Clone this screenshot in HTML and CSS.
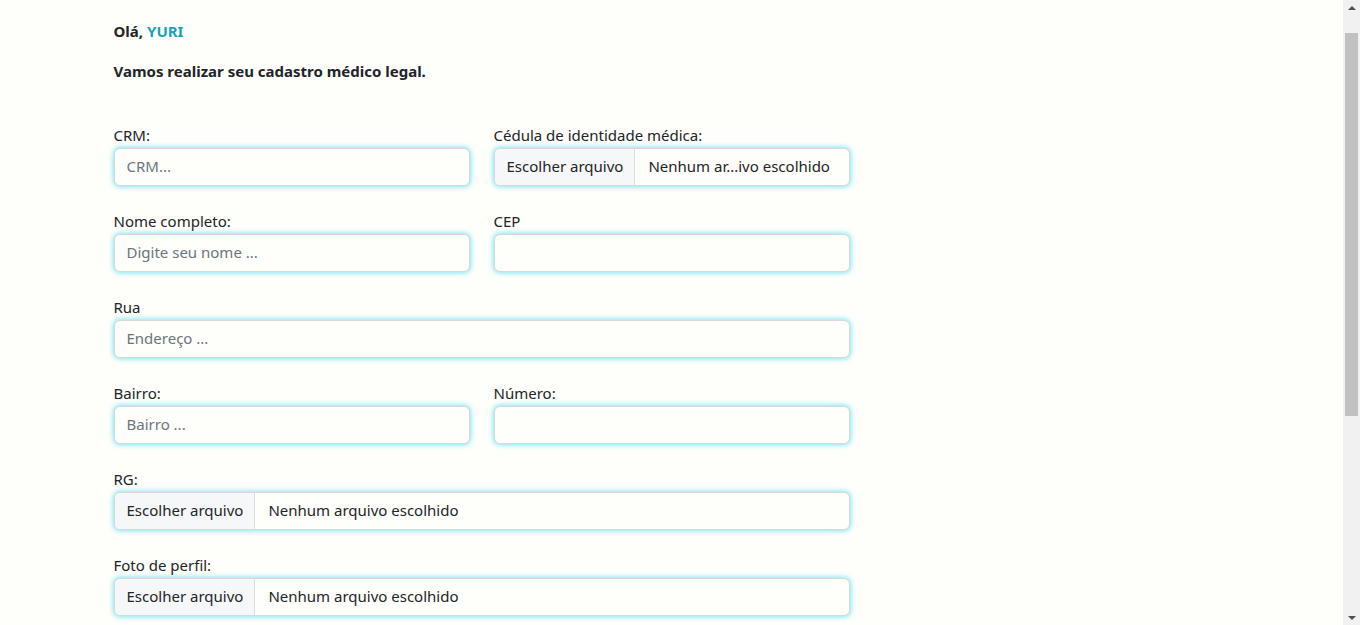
FILE: index.html
```html
<!DOCTYPE html>
<html lang="pt-BR">
<head>
<meta charset="utf-8">
<title>Cadastro médico</title>
<link rel="stylesheet" href="styles.css">
</head>
<body>
<main class="container">
  <div class="col-main">
    <p class="greeting">Olá, <span class="name">YURI</span></p>
    <p class="intro">Vamos realizar seu cadastro médico legal.</p>

    <form class="form">
      <div class="row">
        <div class="field">
          <label class="label">CRM:</label>
          <input class="input" type="text" placeholder="CRM...">
        </div>
        <div class="field">
          <label class="label">Cédula de identidade médica:</label>
          <div class="input file"><span class="file-btn">Escolher arquivo</span><span class="file-name">Nenhum ar...ivo escolhido</span></div>
        </div>
      </div>
      <div class="row">
        <div class="field">
          <label class="label">Nome completo:</label>
          <input class="input" type="text" placeholder="Digite seu nome ...">
        </div>
        <div class="field">
          <label class="label">CEP</label>
          <input class="input" type="text">
        </div>
      </div>
      <div class="row">
        <div class="field">
          <label class="label">Rua</label>
          <input class="input" type="text" placeholder="Endereço ...">
        </div>
      </div>
      <div class="row">
        <div class="field">
          <label class="label">Bairro:</label>
          <input class="input" type="text" placeholder="Bairro ...">
        </div>
        <div class="field">
          <label class="label">Número:</label>
          <input class="input" type="text">
        </div>
      </div>
      <div class="row">
        <div class="field">
          <label class="label">RG:</label>
          <div class="input file"><span class="file-btn">Escolher arquivo</span><span class="file-name">Nenhum arquivo escolhido</span></div>
        </div>
      </div>
      <div class="row">
        <div class="field">
          <label class="label">Foto de perfil:</label>
          <div class="input file"><span class="file-btn">Escolher arquivo</span><span class="file-name">Nenhum arquivo escolhido</span></div>
        </div>
      </div>
    </form>
  </div>
</main>
<div class="scrollbar" aria-hidden="true">
  <span class="sb-arrow sb-up"></span>
  <span class="sb-thumb"></span>
  <span class="sb-arrow sb-down"></span>
</div>
</body>
</html>
```

FILE: styles.css
```css
html, body {
  margin: 0;
  padding: 0;
  background: #fefefa;
}
body {
  font-family: "Noto Sans", "Open Sans", sans-serif;
  font-size: 15px;
  line-height: 24px;
  color: #212529;
  margin-right: 17px;
}
.container {
  max-width: 1116px;
  margin: 0 auto;
  padding: 19px 12px 40px;
}
.col-main {
  width: 736px;
}
.greeting, .intro {
  margin: 0;
  font-weight: 700;
}
.intro {
  margin-top: 16px;
}
.name {
  color: #17a2b8;
}
.form {
  margin-top: 40px;
}
.row {
  display: flex;
  gap: 24px;
  margin-bottom: 23px;
}
.field {
  flex: 1;
  min-width: 0;
}
.label {
  display: block;
  margin-bottom: 1px;
}
.input {
  box-sizing: border-box;
  display: block;
  width: 100%;
  height: 38px;
  padding: 5px 12px 7px;
  font: inherit;
  color: #212529;
  background: #fefefa;
  border: 1px solid #d8d8d8;
  border-radius: 6px;
  box-shadow: 0 0 5px 1px rgba(40, 215, 240, 0.6);
  outline: none;
}
.input::placeholder {
  color: #6c757d;
}
.file {
  display: flex;
  padding: 0;
  overflow: hidden;
}
.file-btn {
  padding: 5px 11px 7px 12px;
  background: #f6f7f9;
  border-right: 1px solid #dcdcdc;
  white-space: nowrap;
}
.file-name {
  padding: 5px 13px 7px;
  white-space: nowrap;
}

/* simulated browser scrollbar */
.scrollbar {
  position: fixed;
  top: 0;
  right: 0;
  width: 17px;
  height: 100vh;
  background: #f1f1f1;
  display: flex;
  flex-direction: column;
  align-items: center;
}
.sb-arrow {
  flex: 0 0 17px;
  width: 17px;
  display: flex;
  align-items: center;
  justify-content: center;
}
.sb-arrow::before {
  content: "";
  width: 0;
  height: 0;
  border-left: 4px solid transparent;
  border-right: 4px solid transparent;
}
.sb-up::before {
  border-bottom: 4px solid #505050;
  margin-top: -2px;
}
.sb-down {
  margin-top: auto;
}
.sb-down::before {
  border-top: 4px solid #505050;
  margin-top: 2px;
}
.sb-thumb {
  margin-top: 16px;
  width: 13px;
  height: 383px;
  background: #c1c1c1;
}
```
